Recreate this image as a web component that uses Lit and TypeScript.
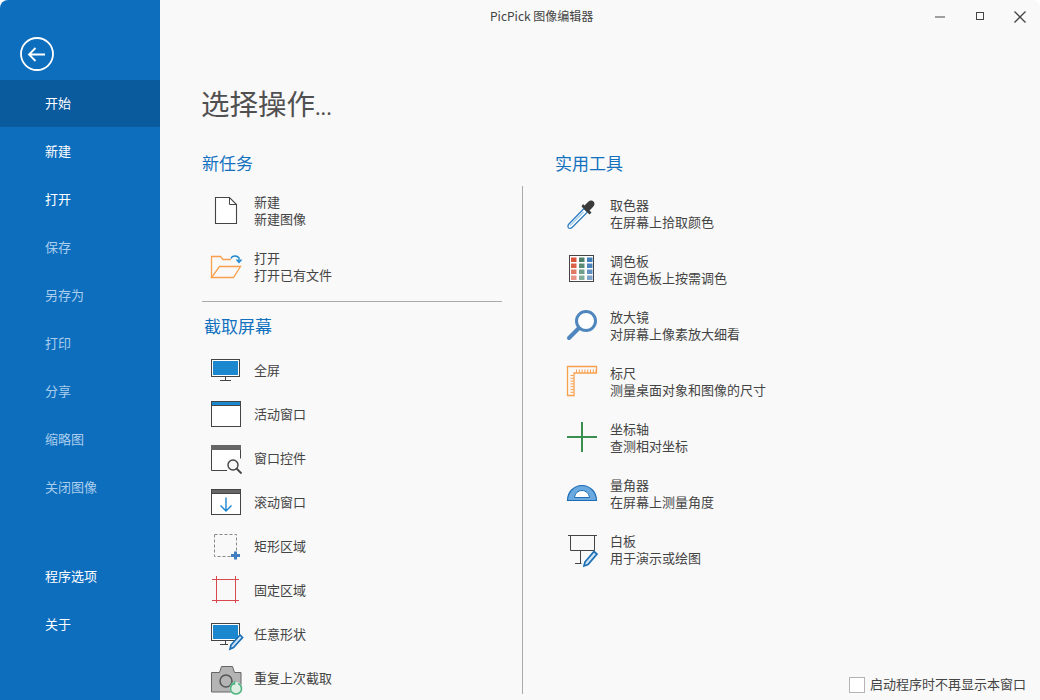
import { LitElement, html, css, svg } from "lit";
import { customElement } from "lit/decorators.js";

const D = "#444";
const B = "#1b87cf";
const windowFrame = (bar: string) => svg`
  <rect x="1.5" y="4.5" width="29" height="25" fill="#fff" stroke="${D}"/>
  <rect x="1" y="4" width="30" height="5" fill="${D}"/>
  <rect x="2" y="5" width="28" height="3" fill="${bar}"/>`;

const icons: Record<string, unknown> = {
  doc: svg`<path d="M5.500 3.500h14l7 7v19h-21z" fill="#fff" stroke="${D}" stroke-width="1.100"/><path d="M19.500 3.500v7h7" fill="none" stroke="${D}"/>`,
  folder: svg`
    <path d="M1.500 27.500v-21h9l2.500 3h8" fill="none" stroke="#f8a04e" stroke-width="1.300"/>
    <path d="M1.500 27.500h22l7-11h-21z" fill="none" stroke="#f8a04e" stroke-width="1.300"/>
    <path d="M21 8.500c1-3 6-3.500 8-.5v4" fill="none" stroke="#1b87cf" stroke-width="1.400"/>
    <path d="M26.500 9.500l2.500 3 2.500-3" fill="none" stroke="#1b87cf" stroke-width="1.400"/>`,
  full: svg`
    <rect x="1.500" y="6.500" width="28" height="17" fill="#fff" stroke="${D}"/>
    <rect x="3" y="8" width="25" height="14" fill="${B}"/>
    <path d="M15.500 24v3.500M10 27.500h11" stroke="${D}" fill="none"/>`,
  active: windowFrame(B),
  control: svg`
    <path d="M30.500 8v9.500M17 29.500H1.500V8" fill="none" stroke="${D}"/>
    <path d="M2 9h28v8.500H17v11.500H2z" fill="#fff"/>
    <rect x="1" y="4" width="30" height="5" fill="#666"/>
    <circle cx="23" cy="24" r="5" fill="none" stroke="${D}" stroke-width="1.400"/>
    <path d="M26.500 27.500l5 5" stroke="${D}" stroke-width="1.800"/>`,
  scroll: svg`${windowFrame("#666")}<path d="M16 12.500v13M10.500 20.500l5.500 5.500 5.500-5.500" fill="none" stroke="${B}" stroke-width="1.400"/>`,
  rect: svg`
    <rect x="4.500" y="5.500" width="22" height="22" fill="none" stroke="#888" stroke-dasharray="3 2"/>
    <path d="M25.500 22.500v8M21 26.500h9" stroke="#3f7fbf" stroke-width="3"/>`,
  fixed: svg`<path d="M2 6.500h27M2 27.500h27M6.500 3v27M25.500 3v27" stroke="#d9484e" fill="none"/>`,
  free: svg`
    <rect x="1.500" y="6.500" width="28" height="17" fill="#fff" stroke="${D}"/>
    <rect x="3" y="8" width="25" height="14" fill="${B}"/>
    <path d="M15.500 24v3.500M10 27.500h8" stroke="${D}" fill="none"/>
    <path d="M21 28l9-10 2.500 2.500-9 10-3.500 1.500z" fill="#cfe4f5" stroke="#1a6fb5" stroke-width="1.700"/>`,
  camera: svg`
    <path d="M1.500 11.500h8l2-6h11l2 6h6.500v19.500h-29.500z" fill="#b4b4b4" stroke="#666"/>
    <circle cx="16" cy="20" r="6" fill="#b4b4b4" stroke="#555" stroke-width="1.500"/>
    <circle cx="26" cy="27.500" r="6.500" fill="#dfeee3"/>
    <path d="M23.800 22.500a5.500 5.500 0 1 0 4.400 0M24.500 20v3h-3.500" fill="none" stroke="#4fb582" stroke-width="1.600"/>`,
  dropper: svg`
    <path d="M18 11.500l3.500 3.500L6 30.500c-1 1-2.500 1-3.500.5-.8-1-.8-2.500 0-3.500z" fill="#fff" stroke="#2d7cc1" stroke-width="1.300"/>
    <path d="M3.500 28.500l1 .5 13.500-13.500-1-1z" fill="#9cc6e8"/>
    <path d="M15.500 9.500l8 8 2-2-2-2 3-3c2.500-2.500 2.500-4.500 1-6s-3.500-1.500-6 1l-3 3-1.500-1.500z" fill="#3b3b3b"/>`,
  palette: svg`
    <rect x="3.500" y="2.500" width="24" height="26" fill="#fff" stroke="${D}"/>
    ${[["#d9533a", "#4b8068", "#3f7db8"], ["#dc6148", "#5a8d76", "#4a85bd"], ["#e07a64", "#6f9f8a", "#5f92c2"], ["#e8958a", "#83ad9b", "#7fa3c8"]].map((r, y) =>
      r.map((c, x) => svg`<rect x="${5 + x * 8}" y="${4.500 + y * 6}" width="5.500" height="4.500" fill="${c}"/>`))}`,
  glass: svg`
    <circle cx="20" cy="12" r="9.500" fill="#fff" stroke="#4f86bd" stroke-width="3"/>
    <path d="M12.500 19.500 3 29" stroke="#4f86bd" stroke-width="4" stroke-linecap="round"/>`,
  ruler: svg`
    <path d="M1.500 1.500h29v6.500h-22.500v22.500h-6.500z" fill="none" stroke="#f8a04e" stroke-width="1.300"/>
    <path d="${Array.from({ length: 8 }, (_, i) => `M${10.500 + i * 2.800} 4.500v3`).join("")}${Array.from({ length: 7 }, (_, i) => `M4.500 ${10.500 + i * 2.800}h3`).join("")}" stroke="#f8a04e" fill="none"/>`,
  cross: svg`<path d="M16 1v30M1 16h30" stroke="#3a8f50" stroke-width="2"/>`,
  protractor: svg`
    <path d="M1.500 23.500c0-8 6-15 14.500-15s14.500 7 14.500 15z" fill="#6aaae0" stroke="#1c6db5" stroke-width="1.200"/>
    <path d="M8.500 20.500c.5-4 3.500-7 7.500-7s7 3 7.500 7z" fill="#fff" stroke="#1c6db5" stroke-width="1"/>`,
  board: svg`
    <path d="M2 2.500h29M4.500 2.500v15h24v-15" fill="none" stroke="${D}"/>
    <path d="M9 30.500h6.500M14.500 17.500v13" fill="none" stroke="${D}"/>
    <path d="M19 29l9-10.500 3 2.500-9 10.500-4 1.500z" fill="#cfe4f5" stroke="#1a6fb5" stroke-width="1.700"/>`,
};

const icon = (name: string) => html`<svg class="icon" viewBox="0 0 33 33" width="33" height="33">${icons[name]}</svg>`;

const nav = [
  ["开始", "on"], ["新建", ""], ["打开", ""], ["保存", "dim"], ["另存为", "dim"],
  ["打印", "dim"], ["分享", "dim"], ["缩略图", "dim"], ["关闭图像", "dim"],
];
const nav2 = ["程序选项", "关于"];
const tasks = [["doc", "新建", "新建图像"], ["folder", "打开", "打开已有文件"]];
const caps = [
  ["full", "全屏"], ["active", "活动窗口"], ["control", "窗口控件"], ["scroll", "滚动窗口"],
  ["rect", "矩形区域"], ["fixed", "固定区域"], ["free", "任意形状"], ["camera", "重复上次截取"],
];
const tools = [
  ["dropper", "取色器", "在屏幕上拾取颜色"],
  ["palette", "调色板", "在调色板上按需调色"],
  ["glass", "放大镜", "对屏幕上像素放大细看"],
  ["ruler", "标尺", "测量桌面对象和图像的尺寸"],
  ["cross", "坐标轴", "查测相对坐标"],
  ["protractor", "量角器", "在屏幕上测量角度"],
  ["board", "白板", "用于演示或绘图"],
];

@customElement("app-root")
export class AppRoot extends LitElement {
  static styles = css`
    :host {
      display: block;
      width: 1040px;
      height: 700px;
      overflow: hidden;
      background: #fff;
      font-family: "Noto Sans CJK SC", "Noto Sans", sans-serif;
      font-size: 13px;
      color: #444;
    }
    .app { display: flex; height: 700px; }
    .side {
      width: 160px;
      flex: none;
      box-sizing: border-box;
      padding-top: 37px;
      background: #0e6ebe;
      border-top-left-radius: 8px;
      color: #fff;
      display: flex;
      flex-direction: column;
    }
    .back { display: block; margin: 0 0 9px 20px; }
    .nav {
      height: 48px;
      box-sizing: border-box;
      padding-bottom: 4px;
      flex: none;
      display: flex;
      align-items: center;
      padding-left: 45px;
    }
    .nav.on { background: #0a5a9e; height: 47px; margin-bottom: 1px; padding-bottom: 2px; }
    .nav.dim { color: #a9cdec; }
    .gap { height: 41px; flex: none; }
    .main {
      flex: 1;
      min-width: 0;
      background: #f9f9f9;
      border-top-right-radius: 8px;
      display: flex;
      flex-direction: column;
    }
    .bar {
      height: 30px;
      flex: none;
      display: flex;
      justify-content: space-between;
      align-items: center;
      font-size: 12px;
      color: #444;
    }
    .bar .t { margin-left: 330px; }
    .ctrls { margin-top: 1px; }
    .ctrls svg { display: block; }
    h1 {
      margin: 53px 0 0 41px;
      font-size: 28.500px;
      line-height: 40px;
      font-weight: 400;
      color: #505050;
      white-space: nowrap;
    }
    h1 span { font-size: 20px; }
    .cols { flex: 1; min-height: 0; display: flex; }
    .left { width: 300px; margin-left: 42px; flex: none; }
    h2 {
      margin: 0;
      font-size: 17px;
      line-height: 24px;
      font-weight: 400;
      color: #1271bf;
    }
    .left h2.first { margin-top: 24px; }
    .rule { height: 1px; background: #aaa; margin-top: 7px; }
    .left h2.cap { margin: 12px 0 0 2px; }
    .caps { margin-top: 9px; }
    .row { display: flex; align-items: center; gap: 11px; padding-left: 8px; }
    .row.big { height: 56px; }
    .row.small { height: 44px; }
    .icon { flex: none; display: block; overflow: visible; }
    .txt { line-height: 17px; }
    .txt div { white-space: nowrap; }
    .tasks { margin-top: 7px; }
    .divider { width: 1px; background: #aaa; flex: none; margin: 59px 0 6px 20px; }
    .right { flex: 1; display: flex; flex-direction: column; min-width: 0; padding-left: 32px; }
    .right h2 { margin-top: 24px; }
    .tools { margin-top: 10px; }
    .tools .row { padding-left: 11px; height: 56px; }
    .foot {
      margin-top: auto;
      align-self: flex-end;
      display: flex;
      align-items: center;
      gap: 5px;
      margin-bottom: 6px;
      margin-right: 14px;
      line-height: 16px;
    }
    .foot .lbl { padding-bottom: 2px; }
    .box { width: 14px; height: 14px; background: #fff; border: 1px solid #b4b4b4; }
  `;

  render() {
    return html`<div class="app">
      <aside class="side">
        <svg class="back" width="34" height="34" viewBox="0 0 34 34">
          <circle cx="17" cy="17" r="16" fill="none" stroke="#fff" stroke-width="1.800"/>
          <path d="M9 17.500h16M15.500 11 9 17.500l6.500 6.500" fill="none" stroke="#fff" stroke-width="1.800"/>
        </svg>
        ${nav.map(([t, c]) => html`<div class="nav ${c}">${t}</div>`)}
        <div class="gap"></div>
        ${nav2.map((t) => html`<div class="nav">${t}</div>`)}
      </aside>
      <main class="main">
        <div class="bar">
          <div class="t">PicPick 图像编辑器</div>
          <div class="ctrls">
            <svg width="120" height="30" viewBox="0 0 120 30">
              <path d="M15 16h10" stroke="#444" fill="none"/>
              <rect x="56.500" y="11.500" width="7" height="7" fill="none" stroke="#444" stroke-width="1"/>
              <path d="M94.500 10.500l11 11M105.500 10.500l-11 11" stroke="#444" stroke-width="1.300" fill="none"/>
            </svg>
          </div>
        </div>
        <h1>选择操作<span>...</span></h1>
        <div class="cols">
          <section class="left">
            <h2 class="first">新任务</h2>
            <div class="tasks">
              ${tasks.map(([i, a, b]) => html`<div class="row big">${icon(i)}<div class="txt"><div>${a}</div><div>${b}</div></div></div>`)}
            </div>
            <div class="rule"></div>
            <h2 class="cap">截取屏幕</h2>
            <div class="caps">
              ${caps.map(([i, a]) => html`<div class="row small">${icon(i)}<div class="txt">${a}</div></div>`)}
            </div>
          </section>
          <div class="divider"></div>
          <section class="right">
            <h2>实用工具</h2>
            <div class="tools">
              ${tools.map(([i, a, b]) => html`<div class="row">${icon(i)}<div class="txt"><div>${a}</div><div>${b}</div></div></div>`)}
            </div>
            <label class="foot"><span class="box"></span><span class="lbl">启动程序时不再显示本窗口</span></label>
          </section>
        </div>
      </main>
    </div>`;
  }
}
